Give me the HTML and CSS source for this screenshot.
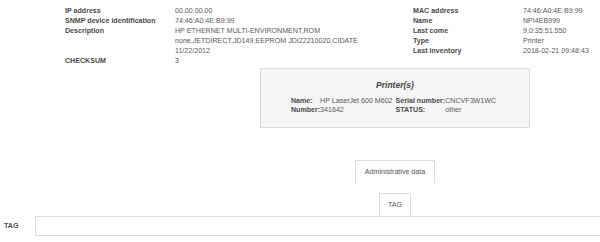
FILE: index.html
```html
<!DOCTYPE html>
<html>
<head>
<meta charset="utf-8">
<link rel="stylesheet" href="styles.css">
</head>
<body>
<div class="info">
  <div class="grid left">
    <div class="lbl">IP address</div><div class="val">00.00.00.00</div>
    <div class="lbl">SNMP device identification</div><div class="val">74:46:A0:4E:B9:99</div>
    <div class="lbl">Description</div><div class="val">HP ETHERNET MULTI-ENVIRONMENT,ROM none,JETDIRECT,JD149,EEPROM JDI22210020,CIDATE 11/22/2012</div>
    <div class="lbl">CHECKSUM</div><div class="val">3</div>
  </div>
  <div class="grid right">
    <div class="lbl">MAC address</div><div class="val">74:46:A0:4E:B9:99</div>
    <div class="lbl">Name</div><div class="val">NPI4EB999</div>
    <div class="lbl">Last come</div><div class="val">9,0:35:51.550</div>
    <div class="lbl">Type</div><div class="val">Printer</div>
    <div class="lbl">Last inventory</div><div class="val">2018-02-21 09:48:43</div>
  </div>
</div>
<div class="center">
  <div class="printers">
    <div class="ptitle">Printer(s)</div>
    <table class="ptable">
      <tr><td class="plbl">Name:</td><td class="pval">HP LaserJet 600 M602</td><td class="plbl">Serial number:</td><td class="pval">CNCVF3W1WC</td></tr>
      <tr><td class="plbl">Number:</td><td class="pval">341642</td><td class="plbl">STATUS:</td><td class="pval">other</td></tr>
    </table>
  </div>
  <div class="tab admin">Administrative data</div>
  <div class="tab tagtab">TAG</div>
</div>
<div class="tagrow">
  <div class="taglbl">TAG</div>
  <div class="taginput"></div>
</div>
</body>
</html>
```
FILE: styles.css
```css
html, body {
  margin: 0;
  padding: 0;
  background: #fff;
}
body {
  font-family: "Liberation Sans", Arial, sans-serif;
  font-size: 7.1px;
  color: #555;
  overflow: hidden;
}
.info {
  display: flex;
  padding: 6px 0 0 65px;
  height: 62px;
  box-sizing: border-box;
}
.grid {
  display: grid;
  line-height: 10px;
  align-content: start;
}
.left {
  grid-template-columns: 110px 200px;
}
.right {
  margin-left: 38px;
  grid-template-columns: 110px 80px;
}
.lbl {
  font-weight: bold;
  color: #4a4a4a;
}
.val {
  color: #5a5a5a;
}
.center {
  display: flex;
  flex-direction: column;
  align-items: center;
  padding-left: 190px;
}
.printers {
  width: 270px;
  height: 60px;
  box-sizing: border-box;
  margin-top: 6px;
  background: #f5f5f5;
  border: 1px solid #ddd;
  display: flex;
  flex-direction: column;
  align-items: center;
  padding-top: 11px;
}
.ptitle {
  font-weight: bold;
  font-style: italic;
  font-size: 8.5px;
  color: #444;
  line-height: 10px;
  margin-bottom: 7px;
}
.ptable {
  border-collapse: collapse;
  line-height: 9px;
}
.ptable td {
  padding: 0;
  white-space: nowrap;
}
.plbl {
  font-weight: bold;
  color: #4a4a4a;
}
.pval {
  color: #5a5a5a;
  padding-right: 3px !important;
}
.tab {
  border: 1px solid #ddd;
  border-bottom: none;
  background: #fff;
  color: #555;
  box-sizing: border-box;
  display: flex;
  align-items: center;
  justify-content: center;
}
.admin {
  margin-top: 32px;
  width: 80px;
  height: 23px;
}
.tagtab {
  margin-top: 10px;
  width: 32px;
  height: 23px;
}
.tagrow {
  display: flex;
  align-items: center;
  height: 20px;
}
.taglbl {
  width: 35px;
  padding-left: 4px;
  box-sizing: border-box;
  font-weight: bold;
  color: #4a4a4a;
}
.taginput {
  flex: 1;
  height: 20px;
  box-sizing: border-box;
  border: 1px solid #ddd;
  border-right: none;
}
```
